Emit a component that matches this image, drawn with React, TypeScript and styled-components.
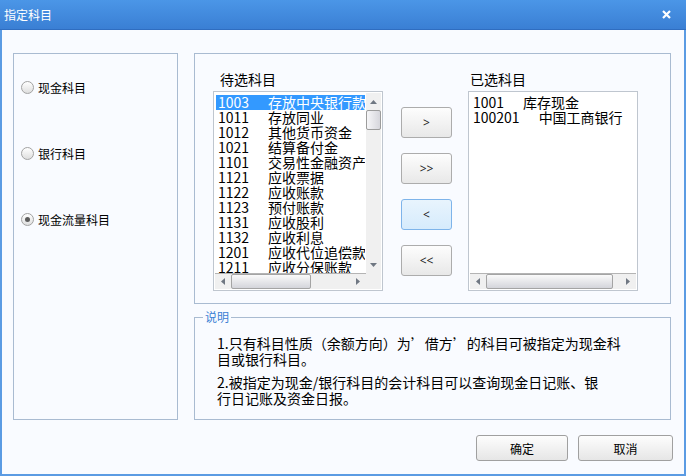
import React from "react";
import styled, { createGlobalStyle } from "styled-components";

const GlobalStyle = createGlobalStyle`
  html, body {
    margin: 0;
    padding: 0;
    background: #ffffff;
  }
  body {
    font-family: "Noto Sans CJK SC", "Noto Sans", sans-serif;
    color: #000;
  }
`;

const Window = styled.div`
  width: 686px;
  height: 476px;
  display: flex;
  flex-direction: column;
  box-sizing: border-box;
`;

const TitleBar = styled.div`
  height: 30px;
  flex: none;
  display: flex;
  align-items: center;
  justify-content: space-between;
  padding: 0 15px 0 4px;
  box-sizing: border-box;
  background: linear-gradient(#4b96e7, #3a7fd4);
  border-bottom: 1px solid #2f6dc0;
  color: #ffffff;
  font-size: 12px;
  line-height: 14px;
`;

const Body = styled.div`
  flex: 1;
  display: flex;
  flex-direction: column;
  box-sizing: border-box;
  background: #f9fbff;
  border: 2px solid #5b9be3;
  border-top: none;
  padding: 23px 11px 0 11px;
`;

const MainRow = styled.div`
  display: flex;
  gap: 16px;
  height: 367px;
`;

const LeftPanel = styled.div`
  width: 165px;
  box-sizing: border-box;
  border: 1px solid #a9bbd1;
  display: flex;
  flex-direction: column;
  gap: 50px;
  padding: 25px 0 0 7px;
`;

const RadioRow = styled.label`
  display: flex;
  align-items: center;
  gap: 4px;
  height: 16px;
  font-size: 12px;
`;

const RadioCircle = styled.span<{ $checked?: boolean }>`
  width: 13px;
  height: 13px;
  box-sizing: border-box;
  border-radius: 50%;
  border: 1px solid #a2a2a2;
  background: linear-gradient(#ffffff, #dedede);
  display: flex;
  align-items: center;
  justify-content: center;

  &::after {
    content: "";
    width: 5px;
    height: 5px;
    border-radius: 50%;
    background: ${(p) => (p.$checked ? "#5c5c5c" : "transparent")};
  }
`;

const RightColumn = styled.div`
  flex: 0 0 477px;
  display: flex;
  flex-direction: column;
  gap: 6px;
`;

const UpperBox = styled.div`
  height: 251px;
  box-sizing: border-box;
  border: 1px solid #a9bbd1;
  padding: 17px 0 0 18px;
  display: flex;
  align-items: flex-start;
`;

const ListColumn = styled.div`
  width: 170px;
  display: flex;
  flex-direction: column;
`;

const ListLabel = styled.div<{ $indent: number }>`
  font-size: 14px;
  line-height: 16px;
  height: 16px;
  margin-bottom: 4px;
  padding-left: ${(p) => p.$indent}px;
`;

const ListBox = styled.div<{ $vscroll?: boolean }>`
  height: 200px;
  box-sizing: border-box;
  border: 1px solid #bfc6cf;
  padding: 1px;
  background: #ffffff;
  display: grid;
  grid-template-columns: ${(p) => (p.$vscroll ? "1fr 15px" : "1fr")};
  grid-template-rows: 1fr 16px;
`;

const Items = styled.div`
  overflow: hidden;
  padding-top: 2px;
  min-width: 0;
`;

const Row = styled.div<{ $selected?: boolean }>`
  height: 15px;
  line-height: 15px;
  font-size: 14px;
  white-space: nowrap;
  overflow: hidden;
  margin: 0 1px;
  padding-left: 2px;
  background: ${(p) => (p.$selected ? "#3399ff" : "transparent")};
  color: ${(p) => (p.$selected ? "#ffffff" : "#000000")};
`;

const Code = styled.span`
  margin-right: 19px;
`;

const VScroll = styled.div`
  background: #f0f0f0;
  display: flex;
  flex-direction: column;
`;

const HScroll = styled.div<{ $span?: boolean }>`
  grid-column: ${(p) => (p.$span ? "1 / -1" : "auto")};
  background: #f0f0f0;
  border-top: 1px solid #b4b4b4;
  box-sizing: border-box;
  display: flex;
`;

const Corner = styled.div`
  background: #f0f0f0;
`;

const ArrowCell = styled.div<{ $vertical?: boolean }>`
  flex: none;
  width: ${(p) => (p.$vertical ? "auto" : "16px")};
  height: ${(p) => (p.$vertical ? "17px" : "auto")};
  display: flex;
  align-items: center;
  justify-content: center;
`;

const VThumb = styled.div`
  height: 20px;
  box-sizing: border-box;
  border: 1px solid #9c9c9c;
  border-radius: 2px;
  background: linear-gradient(to right, #f6f6f8, #d6d6dc);
`;

const HThumb = styled.div<{ $size: number }>`
  width: ${(p) => p.$size}px;
  box-sizing: border-box;
  border: 1px solid #a4a4a4;
  border-radius: 2px;
  background: linear-gradient(#fafafa, #d4d5db);
`;

const Spacer = styled.div`
  flex: 1;
`;

const ButtonColumn = styled.div`
  width: 51px;
  margin: 36px 16px 0 18px;
  display: flex;
  flex-direction: column;
  gap: 15px;
`;

const MoveButton = styled.button<{ $active?: boolean }>`
  width: 51px;
  height: 31px;
  box-sizing: border-box;
  padding: 0;
  border: 1px solid ${(p) => (p.$active ? "#7eb4ea" : "#acacac")};
  border-radius: 3px;
  background: ${(p) =>
    p.$active
      ? "linear-gradient(#e8f4fd, #d6ebfc)"
      : "linear-gradient(#fdfdfd, #e8e8e8)"};
  font-family: "Noto Sans", sans-serif;
  font-size: 12px;
  color: #1e1e1e;
`;

const NoteBox = styled.fieldset`
  margin: 0;
  padding: 0;
  height: 110px;
  box-sizing: border-box;
  border: 1px solid #a9bbd1;
  min-width: 0;
`;

const Legend = styled.legend`
  margin-left: 8px;
  padding: 0 2px;
  font-size: 12px;
  line-height: 14px;
  color: #3b7fd4;
`;

const NoteText = styled.div`
  padding: 11px 0 0 22px;
  font-size: 14px;
  line-height: 16px;
`;

const Paragraph = styled.p`
  margin: 0 0 7px 0;
`;

const Line = styled.span`
  display: block;
  white-space: nowrap;
`;

const Footer = styled.div`
  display: flex;
  justify-content: flex-end;
  gap: 10px;
  margin-top: 15px;
`;

const DialogButton = styled.button<{ $width: number }>`
  width: ${(p) => p.$width}px;
  height: 26px;
  box-sizing: border-box;
  padding: 0;
  border: 1px solid #a0a0a0;
  border-radius: 3px;
  background: linear-gradient(#fdfdfd, #e6e6e6);
  font-family: "Noto Sans CJK SC", sans-serif;
  font-size: 12px;
  color: #000;
`;

const Triangle = ({ dir }: { dir: "up" | "down" | "left" | "right" }) => {
  const pts = {
    up: "0,4 3.5,0 7,4",
    down: "0,0 7,0 3.5,4",
    left: "4,0 4,7 0,3.5",
    right: "0,0 0,7 4,3.5",
  }[dir];
  const vertical = dir === "up" || dir === "down";
  return (
    <svg width={vertical ? 7 : 4} height={vertical ? 4 : 7}>
      <polygon points={pts} fill="#6f7782" />
    </svg>
  );
};

const CloseIcon = () => (
  <svg width="9" height="9" viewBox="0 0 9 9">
    <path d="M1 1 L8 8 M8 1 L1 8" stroke="#ffffff" strokeWidth="2.2" />
  </svg>
);

const pending: [string, string][] = [
  ["1003", "存放中央银行款项"],
  ["1011", "存放同业"],
  ["1012", "其他货币资金"],
  ["1021", "结算备付金"],
  ["1101", "交易性金融资产"],
  ["1121", "应收票据"],
  ["1122", "应收账款"],
  ["1123", "预付账款"],
  ["1131", "应收股利"],
  ["1132", "应收利息"],
  ["1201", "应收代位追偿款"],
  ["1211", "应收分保账款"],
  ["1212", "应收分保合同准备金"],
  ["1221", "其他应收款"],
];

const chosen: [string, string][] = [
  ["1001", "库存现金"],
  ["100201", "中国工商银行"],
];

const HBar = ({ size, span }: { size: number; span?: boolean }) => (
  <HScroll $span={span}>
    <ArrowCell>
      <Triangle dir="left" />
    </ArrowCell>
    <HThumb $size={size} />
    <Spacer />
    <ArrowCell>
      <Triangle dir="right" />
    </ArrowCell>
  </HScroll>
);

export default function App() {
  return (
    <>
      <GlobalStyle />
      <Window>
        <TitleBar>
          <span>指定科目</span>
          <CloseIcon />
        </TitleBar>
        <Body>
          <MainRow>
            <LeftPanel>
              <RadioRow>
                <RadioCircle />
                现金科目
              </RadioRow>
              <RadioRow>
                <RadioCircle />
                银行科目
              </RadioRow>
              <RadioRow>
                <RadioCircle $checked />
                现金流量科目
              </RadioRow>
            </LeftPanel>
            <RightColumn>
              <UpperBox>
                <ListColumn>
                  <ListLabel $indent={7}>待选科目</ListLabel>
                  <ListBox $vscroll>
                    <Items>
                      {pending.map(([code, name], i) => (
                        <Row key={code} $selected={i === 0}>
                          <Code>{code}</Code>
                          {name}
                        </Row>
                      ))}
                    </Items>
                    <VScroll>
                      <ArrowCell $vertical>
                        <Triangle dir="up" />
                      </ArrowCell>
                      <VThumb />
                      <Spacer />
                      <ArrowCell $vertical>
                        <Triangle dir="down" />
                      </ArrowCell>
                    </VScroll>
                    <HBar size={80} />
                    <Corner />
                  </ListBox>
                </ListColumn>
                <ButtonColumn>
                  <MoveButton>&gt;</MoveButton>
                  <MoveButton>&gt;&gt;</MoveButton>
                  <MoveButton $active>&lt;</MoveButton>
                  <MoveButton>&lt;&lt;</MoveButton>
                </ButtonColumn>
                <ListColumn>
                  <ListLabel $indent={2}>已选科目</ListLabel>
                  <ListBox>
                    <Items>
                      {chosen.map(([code, name]) => (
                        <Row key={code}>
                          <Code>{code}</Code>
                          {name}
                        </Row>
                      ))}
                    </Items>
                    <HBar size={127} span />
                  </ListBox>
                </ListColumn>
              </UpperBox>
              <NoteBox>
                <Legend>说明</Legend>
                <NoteText>
                  <Paragraph>
                    <Line>1.只有科目性质（余额方向）为’借方’的科目可被指定为现金科</Line>
                    <Line>目或银行科目。</Line>
                  </Paragraph>
                  <Paragraph>
                    <Line>2.被指定为现金/银行科目的会计科目可以查询现金日记账、银</Line>
                    <Line>行日记账及资金日报。</Line>
                  </Paragraph>
                </NoteText>
              </NoteBox>
            </RightColumn>
          </MainRow>
          <Footer>
            <DialogButton $width={92}>确定</DialogButton>
            <DialogButton $width={95}>取消</DialogButton>
          </Footer>
        </Body>
      </Window>
    </>
  );
}
